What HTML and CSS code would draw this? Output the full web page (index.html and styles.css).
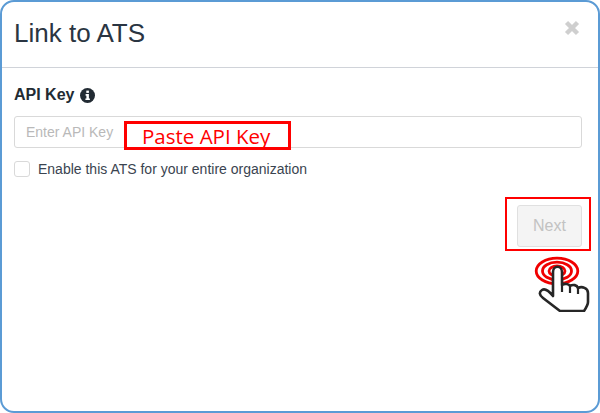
FILE: index.html
```html
<!DOCTYPE html>
<html lang="en">
<head>
    <meta charset="UTF-8">
    <meta name="viewport" content="width=device-width, initial-scale=1.0">
    <title>Link to ATS</title>
    <link rel="stylesheet" href="styles.css">
</head>
<body>
    <div class="modal">
        <header class="modal-header">
            <h1>Link to ATS</h1>
            <button class="close" aria-label="Close">
                <svg width="16" height="16" viewBox="0 0 16 16">
                    <path d="M2.5 2.5 L13.5 13.5 M13.5 2.5 L2.5 13.5" stroke="#cfcfcf" stroke-width="4.4" fill="none"/>
                </svg>
            </button>
        </header>

        <section class="modal-body">
            <div class="label-row">
                <label for="apiKey">API Key</label>
                <svg class="info-icon" width="15" height="15" viewBox="0 0 15 15">
                    <circle cx="7.5" cy="7.5" r="7.5" fill="#222b33"/>
                    <rect x="6.3" y="2.6" width="2.6" height="2.3" fill="#fff"/>
                    <path d="M5.6 6.1 H8.9 V10.4 H9.9 V12 H5.4 V10.4 H6.4 V7.7 H5.6 Z" fill="#fff"/>
                </svg>
            </div>
            <input id="apiKey" class="text-input" type="text" placeholder="Enter API Key">
            <div class="check-row">
                <span class="checkbox"></span>
                <span>Enable this ATS for your entire organization</span>
            </div>
            <div class="actions">
                <button class="btn-next" disabled>Next</button>
            </div>
        </section>

        <!-- red annotations drawn over the dialog -->
        <div class="callout callout-paste">Paste API Key</div>
        <div class="callout callout-next"></div>
        <svg class="hand" width="60" height="60" viewBox="0 0 60 60">
            <g fill="none" stroke="#f00000" stroke-width="2.8">
                <ellipse cx="26" cy="19" rx="20.8" ry="12.8"/>
                <ellipse cx="26" cy="19" rx="14.5" ry="8.8"/>
                <ellipse cx="26" cy="19" rx="8" ry="5"/>
            </g>
            <path d="M22 44 V20 C22 13 31 13 31 20 V33 C34 31 38 32 39 34 C42 32 46 33 47 36 C51 34 57 36 57 41 V50 C57 53 55 56 53 59 H29 L12 46 C8 43 8 40 11 38 C14 36 18 39 22 44 Z" fill="#fff" stroke="#262626" stroke-width="2.6" stroke-linejoin="round"/>
            <path d="M31 33 V40 M39 34 V41 M47 36 V42" fill="none" stroke="#262626" stroke-width="2.2"/>
        </svg>
    </div>
</body>
</html>
```
FILE: styles.css
```css
* {
    margin: 0;
    padding: 0;
    box-sizing: border-box;
}

body {
    font-family: "Liberation Sans", Arial, sans-serif;
    color: #2a3542;
    background: #fff;
    overflow: hidden;
}

.modal {
    position: relative;
    width: 600px;
    height: 413px;
    background: #fff;
    border: 2px solid #5b9bd5;
    border-radius: 14px;
}

.modal-header {
    display: flex;
    justify-content: space-between;
    align-items: flex-start;
    height: 66px;
    padding: 0 18px 0 12px;
    border-bottom: 1px solid #d0d3d9;
}

.modal-header h1 {
    font-size: 26px;
    font-weight: 400;
    line-height: 27px;
    margin-top: 18px;
}

.close {
    background: none;
    border: none;
    margin-top: 18px;
    line-height: 0;
}

.modal-body {
    padding: 18px 16px 0 12px;
}

.label-row {
    display: flex;
    align-items: center;
    gap: 6px;
    height: 18px;
}

.label-row label {
    font-size: 16px;
    font-weight: 700;
    color: #222b33;
}

.text-input {
    display: block;
    width: 100%;
    height: 32px;
    margin-top: 12px;
    padding: 0 11px;
    font-family: inherit;
    font-size: 14px;
    color: #333;
    border: 1px solid #d9d9d9;
    border-radius: 3px;
}

.text-input::placeholder {
    color: #b9b9b9;
    opacity: 1;
}

.check-row {
    display: flex;
    align-items: center;
    gap: 8px;
    margin-top: 13px;
    font-size: 14px;
    line-height: 16px;
    color: #3a4450;
}

.checkbox {
    width: 16px;
    height: 16px;
    border: 1px solid #d9d9d9;
    border-radius: 3px;
}

.actions {
    display: flex;
    justify-content: flex-end;
    margin-top: 28px;
}

.btn-next {
    width: 65px;
    height: 42px;
    font-family: inherit;
    font-size: 16px;
    color: #c2c2c2;
    background: #f4f4f4;
    border: 1px solid #e0e0e0;
    border-radius: 3px;
}

.callout {
    position: absolute;
    border: 3px solid #ff0000;
}

.callout-paste {
    left: 122px;
    top: 119px;
    width: 167px;
    height: 29px;
    padding-left: 15px;
    font-family: "Open Sans", sans-serif;
    font-size: 20.5px;
    line-height: 24px;
    color: #ff0000;
    background: #fff;
}

.callout-next {
    left: 503px;
    top: 195px;
    width: 86px;
    height: 54px;
    border-width: 2px;
}

.hand {
    position: absolute;
    left: 529px;
    top: 250px;
}
```
